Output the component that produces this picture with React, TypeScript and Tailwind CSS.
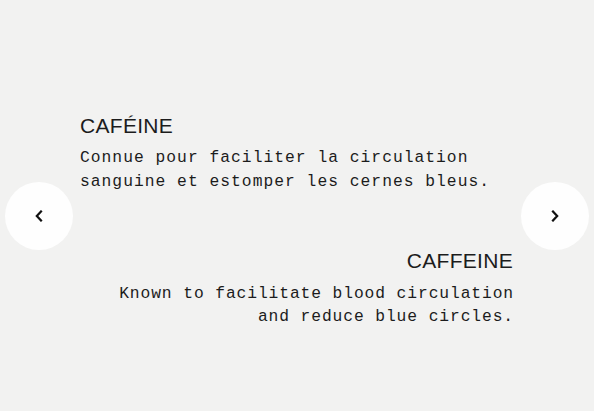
import React from "react";

const Chevron = ({ dir }: { dir: "left" | "right" }) => (
  <svg width="10" height="12" viewBox="0 0 10 12" fill="none">
    {dir === "left" ? (
      <path d="M7 1.5 L2.8 6 L7 10.5" stroke="#111" strokeWidth="2.2" strokeLinecap="square" />
    ) : (
      <path d="M3 1.5 L7.2 6 L3 10.5" stroke="#111" strokeWidth="2.2" strokeLinecap="square" />
    )}
  </svg>
);

export default function App() {
  const mono = { fontFamily: '"Liberation Mono", "DejaVu Sans Mono", monospace' };
  const sans = { fontFamily: '"Liberation Sans", Arial, sans-serif' };
  return (
    <div className="w-[594px] h-[411px] bg-[#f2f2f1] flex items-center px-[5px] pt-[21px] text-[#1c1c1c]">
      <button className="w-[68px] h-[68px] shrink-0 rounded-full bg-[#fefefe] flex items-center justify-center">
        <Chevron dir="left" />
      </button>
      <div className="flex-1 ml-[7px] mr-[7px] mt-[8px] flex flex-col">
        <div className="flex flex-col items-start">
          <h2 className="text-[21px] leading-[28px] tracking-[0.3px]" style={sans}>
            CAFÉINE
          </h2>
          <p className="mt-[6px] text-[16.3px] leading-[24px] tracking-[1.02px]" style={mono}>
            Connue pour faciliter la circulation
            <br />
            sanguine et estomper les cernes bleus.
          </p>
        </div>
        <div className="mt-[53px] flex flex-col items-end text-right">
          <h2 className="text-[21px] leading-[28px] tracking-[0.3px] mr-[1px]" style={sans}>
            CAFFEINE
          </h2>
          <p className="mt-[7px] text-[16.3px] leading-[23px] tracking-[0.9px]" style={mono}>
            Known to facilitate blood circulation
            <br />
            and reduce blue circles.
          </p>
        </div>
      </div>
      <button className="w-[68px] h-[68px] shrink-0 rounded-full bg-[#fefefe] flex items-center justify-center">
        <Chevron dir="right" />
      </button>
    </div>
  );
}
